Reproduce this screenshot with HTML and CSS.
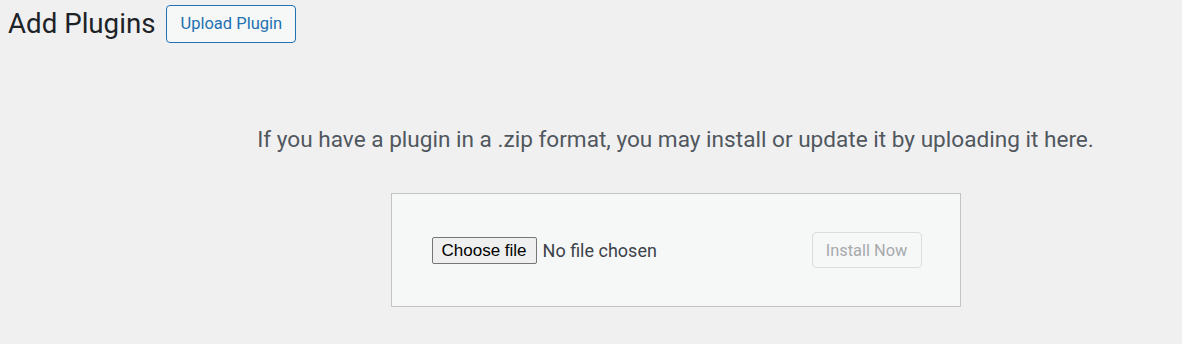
FILE: index.html
```html
<!DOCTYPE html>
<html lang="en">
<head>
<meta charset="utf-8">
<title>Add Plugins</title>
<link rel="stylesheet" href="styles.css">
</head>
<body>
<div class="wrap">
  <div class="page-header">
    <h1 class="page-title">Add Plugins</h1>
    <a class="page-title-action" href="#">Upload Plugin</a>
  </div>
  <div class="upload-plugin">
    <p class="install-help">If you have a plugin in a .zip format, you may install or update it by uploading it here.</p>
    <form class="upload-form">
      <div class="file-field">
        <span class="file-button">Choose file</span>
        <span class="file-name">No file chosen</span>
      </div>
      <button class="install-button" type="button" disabled>Install Now</button>
    </form>
  </div>
</div>
</body>
</html>
```

FILE: styles.css
```css
html, body {
  margin: 0;
  padding: 0;
  background: #f0f0f1;
}

body {
  font-family: Roboto, "Noto Sans", "Liberation Sans", sans-serif;
  color: #3c434a;
}

.wrap {
  padding: 5px 0 0 8px;
}

.page-header {
  display: flex;
  align-items: flex-start;
}

.page-title {
  margin: 0 11px 0 0;
  font-size: 27.7px;
  font-weight: 400;
  line-height: 38px;
  color: #1d2327;
}

.page-title-action {
  display: inline-block;
  box-sizing: border-box;
  height: 38px;
  padding: 0 13px;
  border: 1px solid #2271b1;
  border-radius: 4px;
  background: #f6f7f7;
  color: #2271b1;
  font-size: 16.5px;
  line-height: 36px;
  text-decoration: none;
}

.upload-plugin {
  padding-left: 161px;
  text-align: center;
}

.install-help {
  margin: 82px 0 0;
  font-size: 22.6px;
  line-height: 30px;
  color: #50575e;
}

.upload-form {
  box-sizing: border-box;
  width: 570px;
  margin: 38px auto 0;
  padding: 38px 38px 38px 40px;
  display: flex;
  align-items: center;
  justify-content: space-between;
  background: #f6f7f7;
  border: 1px solid #c3c4c7;
}

.file-field {
  display: flex;
  align-items: center;
}

.file-button {
  box-sizing: border-box;
  height: 27px;
  padding: 0 9px;
  border: 1px solid #767676;
  border-radius: 2px;
  background: #efefef;
  color: #000;
  font-family: "Liberation Sans", Arial, sans-serif;
  font-size: 17px;
  line-height: 25px;
}

.file-name {
  margin-left: 6px;
  font-size: 18px;
  color: #3c434a;
}

.install-button {
  box-sizing: border-box;
  width: 110px;
  height: 36px;
  padding: 0;
  border: 1px solid #dcdcde;
  border-radius: 4px;
  background: #f6f7f7;
  color: #a7aaad;
  font-family: Roboto, "Noto Sans", "Liberation Sans", sans-serif;
  font-size: 16.4px;
}
```
